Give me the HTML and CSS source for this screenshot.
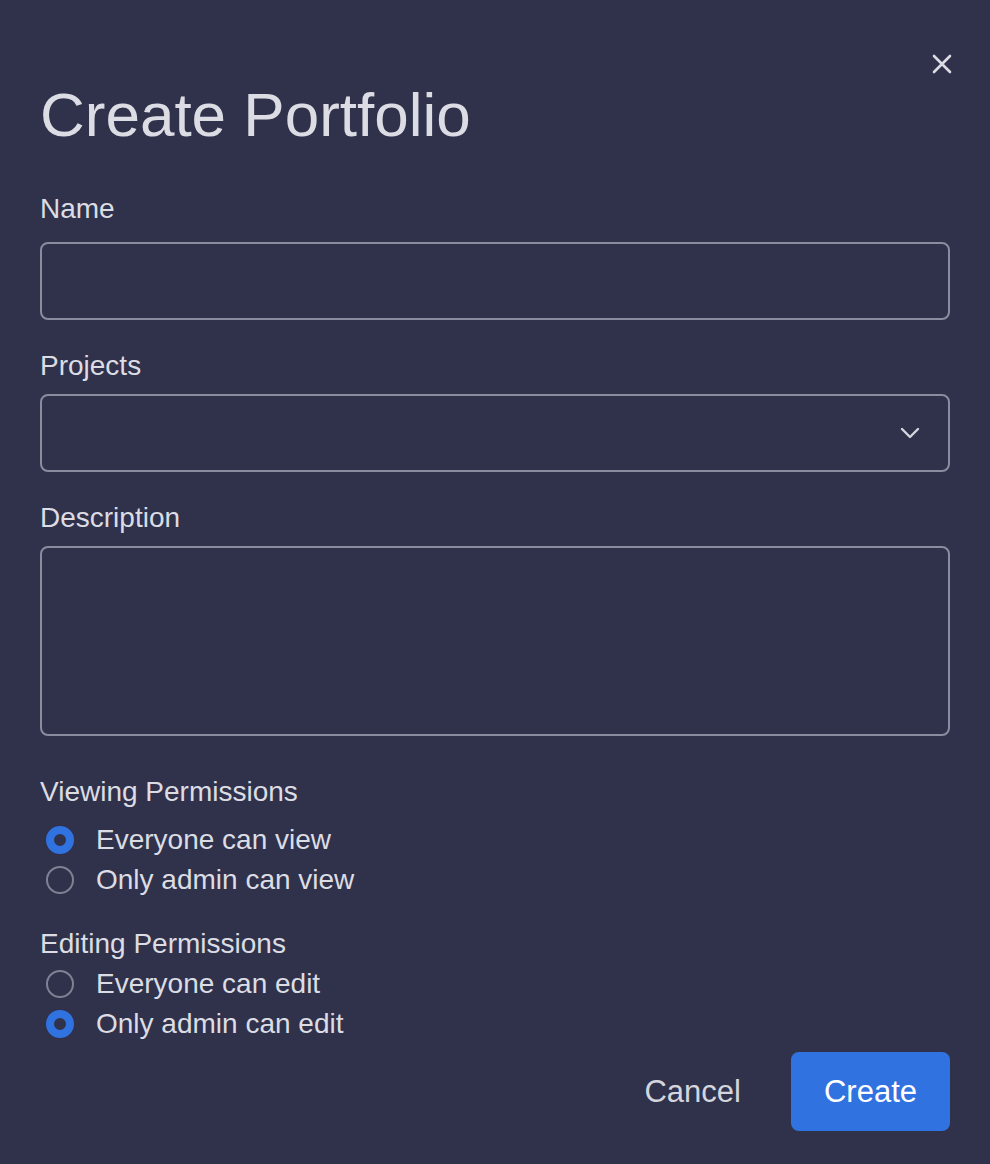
FILE: index.html
```html
<!DOCTYPE html>
<html>
<head>
<meta charset="utf-8">
<link rel="stylesheet" href="styles.css">
</head>
<body>
<div class="dialog">
  <button class="close" aria-label="Close">
    <svg width="20" height="20" viewBox="0 0 20 20"><path d="M2 2 L18 18 M18 2 L2 18" stroke="#dcdde4" stroke-width="2.6" stroke-linecap="round"/></svg>
  </button>
  <h1 class="title">Create Portfolio</h1>

  <div class="field">
    <label class="label">Name</label>
    <div class="input"></div>
  </div>

  <div class="field">
    <label class="label">Projects</label>
    <div class="input select">
      <svg class="chevron" width="20" height="12" viewBox="0 0 20 12"><path d="M2 2 L10 10 L18 2" fill="none" stroke="#d4d5de" stroke-width="2.4" stroke-linecap="round" stroke-linejoin="round"/></svg>
    </div>
  </div>

  <div class="field">
    <label class="label">Description</label>
    <div class="input textarea"></div>
  </div>

  <div class="group view">
    <div class="label">Viewing Permissions</div>
    <div class="radio"><span class="dot on"></span><span>Everyone can view</span></div>
    <div class="radio"><span class="dot"></span><span>Only admin can view</span></div>
  </div>

  <div class="group edit">
    <div class="label">Editing Permissions</div>
    <div class="radio"><span class="dot"></span><span>Everyone can edit</span></div>
    <div class="radio"><span class="dot on"></span><span>Only admin can edit</span></div>
  </div>

  <div class="actions">
    <button class="btn cancel">Cancel</button>
    <button class="btn primary">Create</button>
  </div>
</div>
</body>
</html>
```

FILE: styles.css
```css
html, body {
  margin: 0;
  padding: 0;
  background: #30324b;
}
body {
  font-family: "Liberation Sans", Arial, Helvetica, sans-serif;
  color: #d9dae2;
}
.dialog {
  position: relative;
  width: 990px;
  height: 1164px;
  box-sizing: border-box;
  padding: 84px 40px 0 40px;
}
.close {
  position: absolute;
  top: 54px;
  left: 932px;
  width: 20px;
  height: 20px;
  padding: 0;
  border: 0;
  background: none;
  display: flex;
}
.title {
  margin: 0;
  font-size: 62px;
  line-height: 62px;
  font-weight: 400;
  color: #dcdde4;
}
.field {
  display: flex;
  flex-direction: column;
}
.title + .field { margin-top: 49px; }
.field + .field { margin-top: 32px; }
.label {
  display: block;
  font-size: 28px;
  line-height: 28px;
  color: #dcdde4;
}
.input {
  margin-top: 14px;
  height: 78px;
  box-sizing: border-box;
  border: 2px solid #8a8ca0;
  border-radius: 8px;
}
.title + .field .input { margin-top: 19px; }
.select {
  display: flex;
  align-items: center;
  justify-content: flex-end;
  padding-right: 28px;
}
.textarea {
  height: 190px;
}
.group.view { margin-top: 42px; }
.group.view .label { margin-bottom: 14px; }
.group.edit { margin-top: 30px; }
.group.edit .label { margin-bottom: 6px; }
.radio {
  display: flex;
  align-items: center;
  height: 40px;
  font-size: 28px;
  color: #dcdde4;
}
.dot {
  width: 28px;
  height: 28px;
  box-sizing: border-box;
  border: 2px solid #7f8194;
  border-radius: 50%;
  margin-left: 6px;
  margin-right: 22px;
}
.dot.on {
  border: 8px solid #3172e1;
  background: #30324b;
}
.actions {
  display: flex;
  justify-content: flex-end;
  gap: 17px;
  margin-top: 8px;
}
.btn {
  height: 79px;
  padding: 0 33px;
  border: 0;
  border-radius: 8px;
  font-family: "Liberation Sans", Arial, Helvetica, sans-serif;
  font-size: 31px;
  background: none;
}
.cancel {
  color: #d4d5dd;
}
.primary {
  background: #3172e1;
  color: #ffffff;
}
```
